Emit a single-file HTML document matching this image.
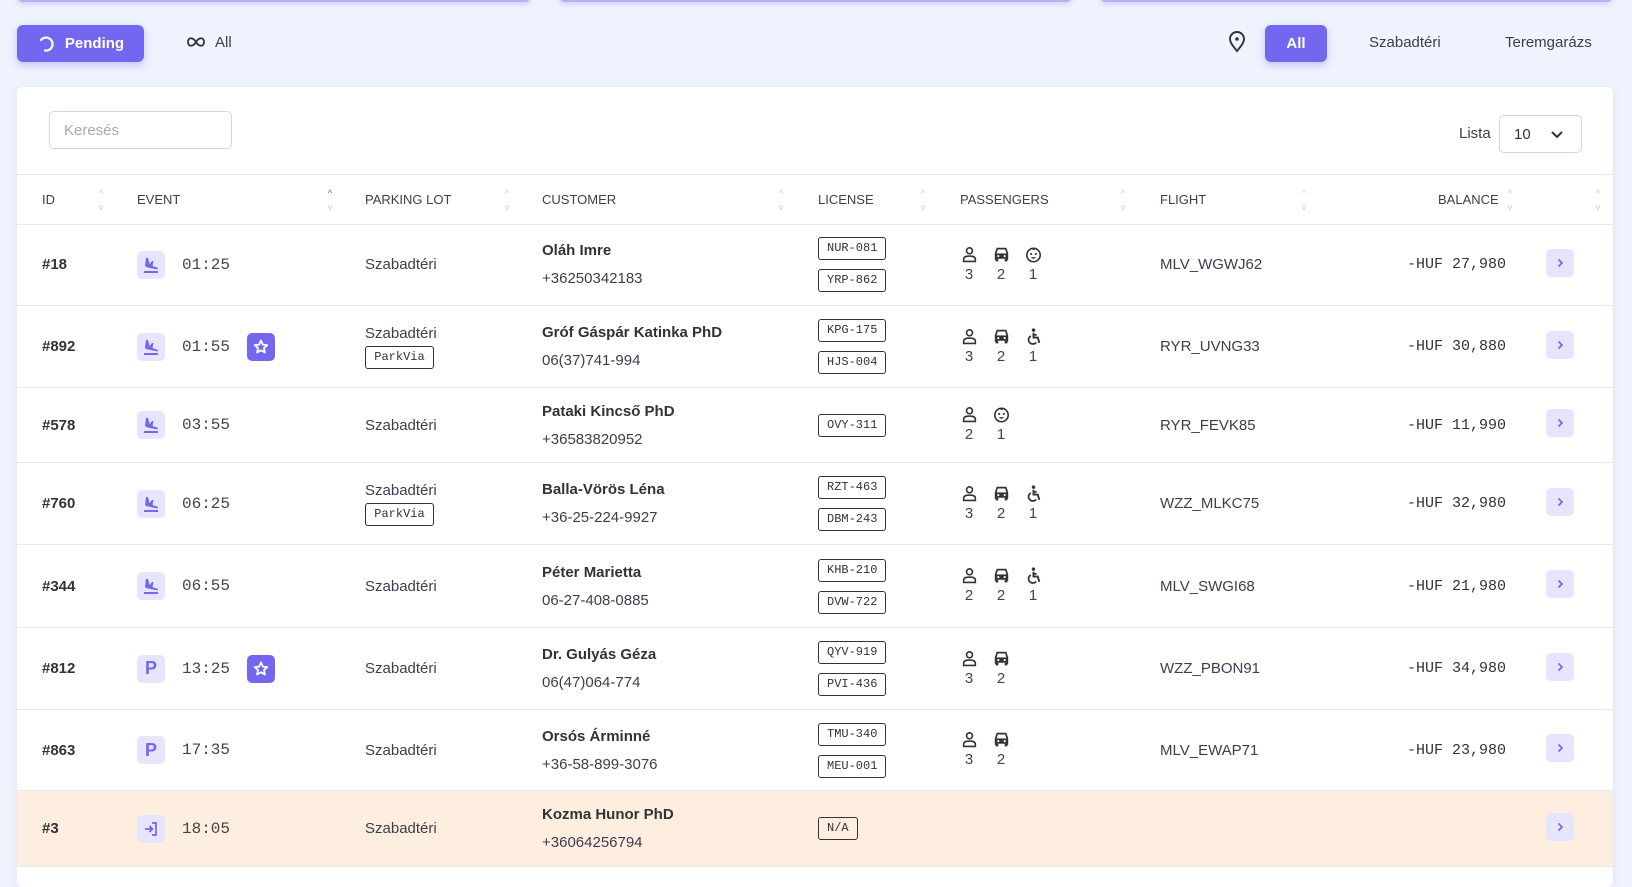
<!DOCTYPE html>
<html><head><meta charset="utf-8"><style>
*{box-sizing:border-box;margin:0;padding:0}
body{width:1632px;height:872px;overflow:hidden;background:#eef3fe;font-family:"Liberation Sans",sans-serif;color:#3a3a4a;position:relative}
.topbar{position:absolute;top:-10px;height:12px;background:#fff;border-bottom:2px solid #b5b0f7;border-radius:0 0 6px 6px;box-shadow:0 2px 6px rgba(115,103,240,.25)}
.btn{position:absolute;top:25px;height:37px;border-radius:6px;display:flex;align-items:center;justify-content:center;font-size:15px;font-weight:bold}
.btn.on{background:#7367f0;color:#fff;box-shadow:0 3px 8px rgba(115,103,240,.35)}
.lnk{position:absolute;top:34px;font-size:15px;color:#3d3d4d}
.card{position:absolute;left:17px;top:87px;width:1596px;height:800px;background:#fff;border-radius:6px;box-shadow:0 2px 10px rgba(60,60,120,.08)}
.search{position:absolute;left:32px;top:24px;width:183px;height:38px;border:1px solid #d4d4dc;border-radius:5px;font-size:15px;color:#a8a8b3;padding:10px 14px}
.hdr{position:absolute;left:0;top:87px;width:1596px;height:51px;border-top:1px solid #e6e6ec;border-bottom:1px solid #e6e6ec;font-size:13px;color:#3d3d4d}
.hdr span{position:absolute;top:17px}
.srt{position:absolute;top:11px;width:10px;font-size:9px;color:#ccc;line-height:14px;text-align:center}
.row{position:absolute;left:0;width:1596px;border-bottom:1px solid #e6e6ec}
.c{position:absolute;top:0;height:100%;display:flex;flex-direction:column;justify-content:center}
.id{font-weight:bold;font-size:15px;color:#333}
.ev{display:flex;align-items:center;flex-direction:row}
.ei{width:28px;height:28px;background:#e7e5fd;border-radius:5px;display:flex;align-items:center;justify-content:center;color:#7367f0;font-weight:bold;font-size:18px}
.tm{font-family:"Liberation Mono",monospace;font-size:16px;margin-left:17px;color:#444;width:50px}
.star{width:28px;height:28px;background:#7367f0;border-radius:5px;display:flex;align-items:center;justify-content:center;margin-left:15px}
.pl{font-size:15px;color:#3d3d4d}
.tag{display:inline-block;border:1px solid #333;border-radius:3px;font-family:"Liberation Mono",monospace;font-size:12px;height:23px;line-height:21px;padding:0 8px;color:#333}
.nm{font-weight:bold;font-size:15px;color:#333}
.ph{font-size:15px;color:#3d3d4d;margin-top:11px}
.pax{flex-direction:row;justify-content:flex-start;align-items:center}
.pi{width:32px;text-align:center;font-size:15px;color:#444;line-height:19px}
.pi svg{display:block;margin:0 auto 2px}
.fl{font-size:15px;color:#3d3d4d}
.bal{font-family:"Liberation Mono",monospace;font-size:15px;color:#333;text-align:right}
.go{width:28px;height:28px;background:#e7e5fd;border-radius:5px;display:flex;align-items:center;justify-content:center}
</style></head><body>
<div class="topbar" style="left:17px;width:514px"></div>
<div class="topbar" style="left:559px;width:513px"></div>
<div class="topbar" style="left:1100px;width:513px"></div>

<div class="btn on" style="left:17px;width:127px"><svg width="18" height="18" viewBox="0 0 18 18" style="margin-right:10px"><path d="M4 5 A6.5 6.5 0 1 1 8 15.5" fill="none" stroke="#fff" stroke-width="2.2" stroke-linecap="round"/></svg>Pending</div>
<div class="lnk" style="left:186px"><svg width="20" height="12" viewBox="0 0 20 12" style="vertical-align:-1px;margin-right:9px"><path d="M10 6 C7 1,2 1,2 6 C2 11,7 11,10 6 C13 1,18 1,18 6 C18 11,13 11,10 6Z" fill="none" stroke="#333" stroke-width="1.8"/></svg>All</div>

<svg style="position:absolute;left:1227px;top:31px" width="20" height="22" viewBox="0 0 20 22"><path d="M10 20 C5 14,3 11,3 8 A7 7 0 0 1 17 8 C17 11,15 14,10 20Z" fill="none" stroke="#333" stroke-width="1.9"/><circle cx="10" cy="8" r="1.8" fill="#333"/></svg>
<div class="btn on" style="left:1265px;width:62px">All</div>
<div class="lnk" style="left:1369px">Szabadtéri</div>
<div class="lnk" style="left:1505px">Teremgarázs</div>

<div class="card">
<div class="search">Keresés</div>
<div style="position:absolute;left:1442px;top:38px;font-size:15px;color:#3d3d4d">Lista</div>
<div style="position:absolute;left:1482px;top:28px;width:83px;height:38px;border:1px solid #d4d4dc;border-radius:5px;font-size:15px;color:#333;padding:10px 14px">10<svg style="position:absolute;left:50px;top:14px" width="14" height="9" viewBox="0 0 14 9"><path d="M2 2 L7 7 L12 2" fill="none" stroke="#333" stroke-width="2"/></svg></div>

<div class="hdr">
<span style="left:25px">ID</span><span style="left:120px">EVENT</span><span style="left:348px">PARKING LOT</span><span style="left:525px">CUSTOMER</span><span style="left:801px">LICENSE</span><span style="left:943px">PASSENGERS</span><span style="left:1143px">FLIGHT</span><span style="left:1421px">BALANCE</span>
<div class="srt" style="left:79px">^<br>v</div><div class="srt" style="left:308px;color:#666">^<br><span style="position:static;color:#ccc">v</span></div><div class="srt" style="left:485px">^<br>v</div><div class="srt" style="left:759px">^<br>v</div><div class="srt" style="left:901px">^<br>v</div><div class="srt" style="left:1101px">^<br>v</div><div class="srt" style="left:1282px">^<br>v</div><div class="srt" style="left:1488px">^<br>v</div><div class="srt" style="left:1576px">^<br>v</div>
</div>

<svg width="0" height="0" style="position:absolute"><defs>
<symbol id="land" viewBox="0 0 18 18"><path d="M4 2 L6 2 L7.5 8 L10 5 L11.5 5 L10.5 10 L16 12 L15.5 13.5 L4 11 L3 10Z" fill="#7367f0"/><rect x="2" y="15" width="14" height="2" fill="#7367f0"/></symbol>
<symbol id="per" viewBox="0 0 16 16"><circle cx="8" cy="4.5" r="2.8" fill="none" stroke="#333" stroke-width="1.5"/><path d="M2.5 14.5 V12.5 C2.5 10 5 9.5 8 9.5 C11 9.5 13.5 10 13.5 12.5 V14.5Z" fill="none" stroke="#333" stroke-width="1.5"/></symbol>
<symbol id="car" viewBox="0 0 16 16"><path d="M2.5 13 V7 L4 2.5 H12 L13.5 7 V13" fill="none" stroke="#333" stroke-width="1.6"/><path d="M2.5 7 H13.5 V12 H2.5Z" fill="#333"/><circle cx="5" cy="9.5" r="1" fill="#fff"/><circle cx="11" cy="9.5" r="1" fill="#fff"/><rect x="2.5" y="12" width="2.5" height="2.5" fill="#333"/><rect x="11" y="12" width="2.5" height="2.5" fill="#333"/></symbol>
<symbol id="baby" viewBox="0 0 16 16"><circle cx="8" cy="8.5" r="6.3" fill="none" stroke="#333" stroke-width="1.5"/><circle cx="5.8" cy="7.5" r="1" fill="#333"/><circle cx="10.2" cy="7.5" r="1" fill="#333"/><path d="M5.5 10.5 Q8 13.5 10.5 10.5Z" fill="#333"/><path d="M7 2.5 Q8 4 9.5 2.3" fill="none" stroke="#333" stroke-width="1.2"/></symbol>
<symbol id="wc" viewBox="0 0 16 16"><circle cx="8" cy="2" r="1.6" fill="#333"/><path d="M8 4.5 V9 H12 L13.5 14" fill="none" stroke="#333" stroke-width="1.8"/><path d="M8 6.5 H11" stroke="#333" stroke-width="1.6"/><path d="M5.5 7.5 A4 4 0 1 0 10.5 13.5" fill="none" stroke="#333" stroke-width="1.6"/></symbol>
<symbol id="st" viewBox="0 0 16 16"><path d="M8 1.5 L9.9 5.6 L14.3 6.1 L11 9.1 L11.9 13.5 L8 11.3 L4.1 13.5 L5 9.1 L1.7 6.1 L6.1 5.6Z" fill="none" stroke="#fff" stroke-width="1.8" stroke-linejoin="round"/></symbol>
<symbol id="chev" viewBox="0 0 12 12"><path d="M4.5 2.5 L8 6 L4.5 9.5" fill="none" stroke="#7367f0" stroke-width="1.7"/></symbol>
<symbol id="enter" viewBox="0 0 18 18"><path d="M10 3 H14 V15 H10" fill="none" stroke="#7367f0" stroke-width="1.7"/><path d="M3 9 H10 M7.5 6 L10.5 9 L7.5 12" fill="none" stroke="#7367f0" stroke-width="1.7"/></symbol>
</defs></svg>

<div id="rows"></div>
</div>

<script>
const R=[
[137,82,"#18","land","01:25",0,0,"Oláh Imre","+36250342183",["NUR-081","YRP-862"],[["per",3],["car",2],["baby",1]],"MLV_WGWJ62","-HUF 27,980"],
[219,82,"#892","land","01:55",1,1,"Gróf Gáspár Katinka PhD","06(37)741-994",["KPG-175","HJS-004"],[["per",3],["car",2],["wc",1]],"RYR_UVNG33","-HUF 30,880"],
[301,75,"#578","land","03:55",0,0,"Pataki Kincső PhD","+36583820952",["OVY-311"],[["per",2],["baby",1]],"RYR_FEVK85","-HUF 11,990"],
[376,82,"#760","land","06:25",0,1,"Balla-Vörös Léna","+36-25-224-9927",["RZT-463","DBM-243"],[["per",3],["car",2],["wc",1]],"WZZ_MLKC75","-HUF 32,980"],
[458,83,"#344","land","06:55",0,0,"Péter Marietta","06-27-408-0885",["KHB-210","DVW-722"],[["per",2],["car",2],["wc",1]],"MLV_SWGI68","-HUF 21,980"],
[541,82,"#812","P","13:25",1,0,"Dr. Gulyás Géza","06(47)064-774",["QYV-919","PVI-436"],[["per",3],["car",2]],"WZZ_PBON91","-HUF 34,980"],
[623,81,"#863","P","17:35",0,0,"Orsós Árminné","+36-58-899-3076",["TMU-340","MEU-001"],[["per",3],["car",2]],"MLV_EWAP71","-HUF 23,980"],
[704,76,"#3","enter","18:05",0,0,"Kozma Hunor PhD","+36064256794",["N/A"],[],"",""]
];
let h="";
for(const r of R){
 const hl=r[2]=="#3";
 const ic=r[3]=="P"?"P":`<svg width="18" height="18"><use href="#${r[3]}"/></svg>`;
 h+=`<div class="row" style="top:${r[0]}px;height:${r[1]}px;${hl?'background:#fdeee0':''}">
 <div class="c id" style="left:25px">${r[2]}</div>
 <div class="c ev" style="left:120px;flex-direction:row;align-items:center"><div class="ei">${ic}</div><div class="tm">${r[4]}</div>${r[5]?'<div class="star"><svg width="16" height="16"><use href="#st"/></svg></div>':''}</div>
 <div class="c" style="left:348px"><div class="pl">Szabadtéri</div>${r[6]?'<div style="margin-top:4px"><span class="tag" style="width:69px;text-align:center;padding:0">ParkVia</span></div>':''}</div>
 <div class="c" style="left:525px"><div class="nm">${r[7]}</div><div class="ph">${r[8]}</div></div>
 <div class="c" style="left:801px;gap:9px">${r[9].map(t=>`<div><span class="tag">${t}</span></div>`).join("")}</div>
 <div class="c pax" style="left:936px">${r[10].map(p=>`<div class="pi"><svg width="17" height="17"><use href="#${p[0]}"/></svg>${p[1]}</div>`).join("")}</div>
 <div class="c fl" style="left:1143px">${r[11]}</div>
 <div class="c bal" style="left:1330px;width:159px;align-items:flex-end">${r[12]}</div>
 <div class="c" style="left:1529px"><div class="go" style="margin-top:-4px"><svg width="12" height="12"><use href="#chev"/></svg></div></div>
 </div>`;
}
document.getElementById("rows").innerHTML=h;
</script>
</body></html>
